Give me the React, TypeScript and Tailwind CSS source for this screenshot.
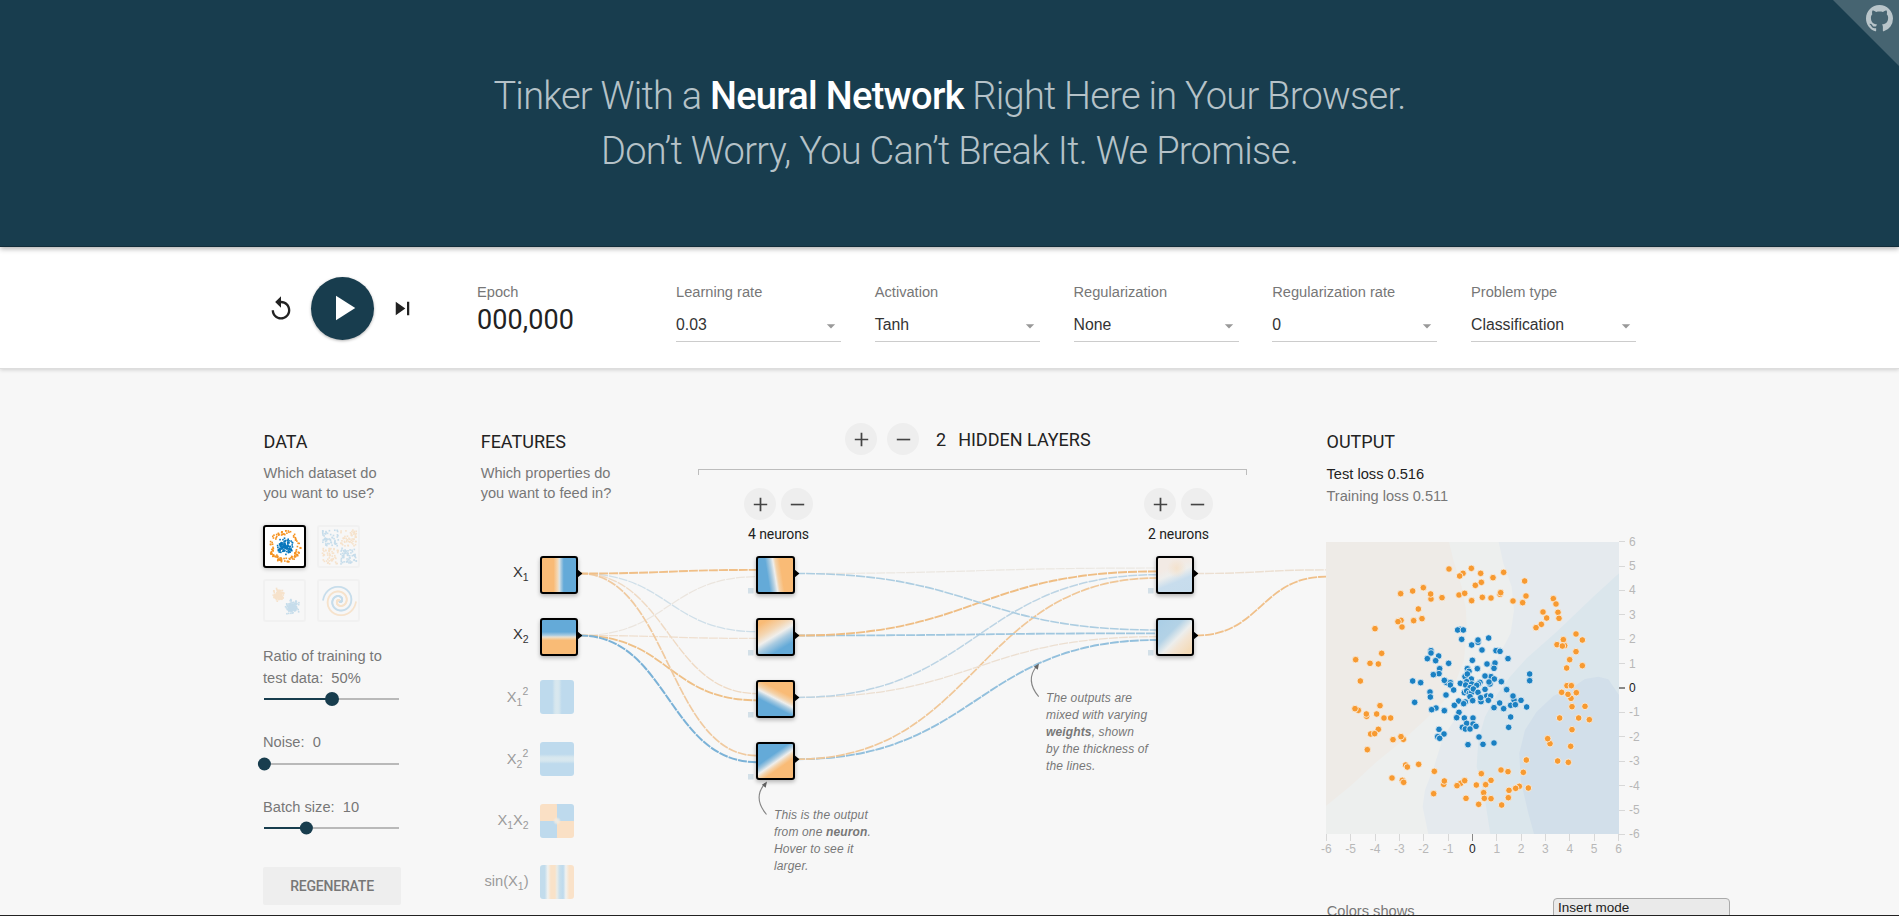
import React from "react";

const arial = "font-['Liberation_Sans',Arial,sans-serif]";
const roboto = "font-['Roboto',sans-serif]";

type Pt = [number, number];

function seeded(seed: number) {
  let a = seed;
  return () => {
    a = (a + 0x6d2b79f5) | 0;
    let t = Math.imul(a ^ (a >>> 15), 1 | a);
    t = (t + Math.imul(t ^ (t >>> 7), 61 | t)) ^ t;
    return ((t ^ (t >>> 14)) >>> 0) / 4294967296;
  };
}

const ORANGE = "#f59322";
const BLUE = "#0877bd";

/* ---------- header ---------- */

function GithubCorner() {
  return (
    <div className="absolute right-0 top-0 h-[66px] w-[66px]">
      <svg viewBox="0 0 66 66" className="absolute inset-0 h-full w-full">
        <path d="M0 0H66V66Z" fill="#466471" />
      </svg>
      <svg viewBox="0 0 16 16" className="absolute right-[6px] top-[5px] h-[27px] w-[27px]" fill="#b9c5ca">
        <path d="M8 0C3.58 0 0 3.58 0 8c0 3.54 2.29 6.53 5.47 7.59.4.07.55-.17.55-.38 0-.19-.01-.82-.01-1.49-2.01.37-2.53-.49-2.69-.94-.09-.23-.48-.94-.82-1.13-.28-.15-.68-.52-.01-.53.63-.01 1.08.58 1.23.82.72 1.21 1.87.87 2.33.66.07-.52.28-.87.51-1.07-1.78-.2-3.64-.89-3.64-3.95 0-.87.31-1.59.82-2.15-.08-.2-.36-1.02.08-2.12 0 0 .67-.21 2.2.82.64-.18 1.32-.27 2-.27s1.36.09 2 .27c1.53-1.04 2.2-.82 2.2-.82.44 1.1.16 1.92.08 2.12.51.56.82 1.27.82 2.15 0 3.07-1.87 3.75-3.65 3.95.29.25.54.73.54 1.48 0 1.07-.01 1.93-.01 2.2 0 .21.15.46.55.38A8.01 8.01 0 0 0 16 8c0-4.42-3.58-8-8-8z" />
      </svg>
    </div>
  );
}

function Header() {
  return (
    <header className="relative z-20 h-[247px] shrink-0 border-b border-[#122d3a] bg-[#183d4e] pt-[69px] shadow-[0_2px_5px_rgba(0,0,0,0.3)]">
      <h1 className={`${roboto} text-center text-[38px] font-light leading-[55px] tracking-[-0.72px] text-[#b5c2c8]`}>
        Tinker With a <b className="font-medium text-white">Neural Network</b> Right Here in Your Browser.
        <br />
        <span className="tracking-[-0.68px]">Don’t Worry, You Can’t Break It. We Promise.</span>
      </h1>
      <GithubCorner />
    </header>
  );
}

/* ---------- top controls ---------- */

function Select({ label, value }: { label: string; value: string }) {
  return (
    <div className="w-[165px] shrink-0">
      <div className="whitespace-nowrap text-[14.65px] leading-5 text-[#777]">{label}</div>
      <div className="mt-[11px] flex items-center justify-between border-b border-[#ccc] pb-1 text-[15.8px] leading-6 text-[#333]">
        <span>{value}</span>
        <svg viewBox="0 0 24 24" className="mt-[2px] h-5 w-5" fill="#999">
          <path d="M7 10l5 5 5-5z" />
        </svg>
      </div>
    </div>
  );
}

function Controls() {
  return (
    <section className="relative z-10 flex h-[122px] shrink-0 border-b border-[#ddd] bg-white pl-[267px] shadow-[0_1px_4px_rgba(0,0,0,0.16)]">
      <div className="flex h-[122px] items-center">
        <svg viewBox="0 0 24 24" className="mt-[2px] h-7 w-7" fill="#222">
          <path d="M12 5V1L7 6l5 5V7c3.31 0 6 2.69 6 6s-2.69 6-6 6-6-2.69-6-6H4c0 4.42 3.58 8 8 8s8-3.58 8-8-3.58-8-8-8z" />
        </svg>
        <button className="ml-4 flex h-[63px] w-[63px] items-center justify-center rounded-full bg-[#183d4e] shadow-[0_1px_3px_rgba(0,0,0,0.3)]">
          <svg viewBox="0 0 24 24" className="h-[42px] w-[42px]" fill="#fff">
            <path d="M8 5v14l11-7z" />
          </svg>
        </button>
        <svg viewBox="0 0 24 24" className="ml-[15px] h-[27px] w-[27px]" fill="#222">
          <path d="M6 18l8.5-6L6 6v12zM16 6v12h2V6h-2z" />
        </svg>
      </div>
      <div className="ml-[61px] w-[199px] pt-[35px]">
        <div className="text-[14.65px] leading-5 text-[#777]">Epoch</div>
        <div className={`${roboto} mt-[2px] text-[27px] font-normal leading-8 tracking-[0.1px] text-[#222]`}>000,000</div>
      </div>
      <div className="flex gap-[33.75px] pt-[35px]">
        <Select label="Learning rate" value="0.03" />
        <Select label="Activation" value="Tanh" />
        <Select label="Regularization" value="None" />
        <Select label="Regularization rate" value="0" />
        <Select label="Problem type" value="Classification" />
      </div>
    </section>
  );
}

/* ---------- data column ---------- */

function Title({ children }: { children: React.ReactNode }) {
  return <h4 className={`${roboto} text-[18px] font-normal leading-6 text-[#222]`}>{children}</h4>;
}

type Dot = { x: number; y: number; c: string };

function circleDots(): Dot[] {
  const r = seeded(11);
  const out: Dot[] = [];
  for (let i = 0; i < 130; i++) {
    const a = r() * Math.PI * 2;
    const d = 8.5 * r();
    out.push({ x: 20 + d * Math.cos(a), y: 19.5 + d * Math.sin(a), c: BLUE });
  }
  for (let i = 0; i < 115; i++) {
    const a = r() * Math.PI * 2;
    const d = 11.8 + r() * 4.2;
    out.push({ x: 20 + d * Math.cos(a), y: 19.5 + d * Math.sin(a), c: ORANGE });
  }
  return out;
}

function xorDots(): Dot[] {
  const r = seeded(37);
  const out: Dot[] = [];
  for (let i = 0; i < 230; i++) {
    const x = r() * 2 - 1;
    const y = r() * 2 - 1;
    out.push({
      x: 20.5 + x * 16 + Math.sign(x),
      y: 20 + y * 16 + Math.sign(y),
      c: x * y > 0 ? BLUE : ORANGE,
    });
  }
  return out;
}

function gaussDots(): Dot[] {
  const r = seeded(5);
  const g = () => (r() + r() + r() - 1.5) * 1.6;
  const out: Dot[] = [];
  for (let i = 0; i < 150; i++) {
    out.push({ x: 14 + g() * 3, y: 14 + g() * 3, c: ORANGE });
    out.push({ x: 27.3 + g() * 3.5, y: 26.5 + g() * 3.5, c: BLUE });
  }
  return out;
}

function spiralDots(): Dot[] {
  const out: Dot[] = [];
  for (let i = 0; i < 150; i++) {
    const d = (i / 150) * 16.5;
    const t = (1.75 * i * 2 * Math.PI) / 150;
    const dx = d * Math.sin(t);
    const dy = d * Math.cos(t);
    out.push({ x: 20.5 + dx, y: 20 + dy, c: BLUE });
    out.push({ x: 20.5 - dx, y: 20 - dy, c: ORANGE });
  }
  return out;
}

function Thumb({ dots, active }: { dots: Dot[]; active?: boolean }) {
  return (
    <div
      className={
        active
          ? "h-[43px] w-[43px] rounded-[3px] border-2 border-black bg-white shadow-[0_1px_4px_rgba(0,0,0,0.25)]"
          : "h-[43px] w-[43px] rounded-[3px] border-2 border-[#f1f1f1]"
      }
    >
      <svg viewBox="0 0 39 39" className={active ? "h-full w-full" : "h-full w-full opacity-20"}>
        {dots.map((d, i) => (
          <rect key={i} x={d.x - 0.8} y={d.y - 0.8} width={1.6} height={1.6} fill={d.c} />
        ))}
      </svg>
    </div>
  );
}

function Slider({ at, big }: { at: number; big?: boolean }) {
  return (
    <svg viewBox="-8 0 151 14" className="-ml-[7px] h-[14px] w-[151px]">
      <rect x="0" y="6" width="135" height="2" fill="#b9b9b9" />
      <rect x="0" y="6" width={at} height="2" fill="#183d4e" />
      <circle cx={at} cy="7" r={big ? 7 : 6.5} fill="#183d4e" />
    </svg>
  );
}

function DataColumn() {
  return (
    <div className="w-[217px] shrink-0 pt-[7px]">
      <div className="pl-[0.5px]">
        <Title>DATA</Title>
        <p className="mt-[9px] text-[14.65px] leading-5 text-[#777]">
          Which dataset do
          <br />
          you want to use?
        </p>
      </div>
      <div className="mt-[22px] grid w-[97px] grid-cols-2 gap-[11px]">
        <Thumb dots={circleDots()} active />
        <Thumb dots={xorDots()} />
        <Thumb dots={gaussDots()} />
        <Thumb dots={spiralDots()} />
      </div>
      <p className="mt-[23px] text-[14.65px] leading-[22px] text-[#777]">
        Ratio of training to
        <br />
        test data:&nbsp; 50%
      </p>
      <div className="mt-[3px] flex">
        <Slider at={68} big />
      </div>
      <p className="mt-[25px] text-[14.65px] leading-[22px] text-[#777]">Noise:&nbsp; 0</p>
      <div className="mt-1 flex">
        <Slider at={0.4} />
      </div>
      <p className="mt-[25px] text-[14.65px] leading-[22px] text-[#777]">Batch size:&nbsp; 10</p>
      <div className="mt-[3px] flex">
        <Slider at={42.4} />
      </div>
      <button className={`${roboto} mt-8 h-[38px] w-[138px] rounded-[2px] bg-[#eee] text-[14px] font-medium tracking-[-0.2px] text-[#777]`}>
        REGENERATE
      </button>
    </div>
  );
}

/* ---------- network ---------- */

function RoundButton({ minus }: { minus?: boolean }) {
  return (
    <button className="flex h-8 w-8 items-center justify-center rounded-full bg-[#eee]">
      <svg viewBox="0 0 24 24" className="mt-px h-[23px] w-[23px]" fill="#444">
        {minus ? <path d="M5 11.2h14v1.7H5z" /> : <path d="M19 12.9h-6.1V19h-1.8v-6.1H5v-1.8h6.1V5h1.8v6.1H19z" />}
      </svg>
    </button>
  );
}

function NeuronControls({ label }: { label: string }) {
  return (
    <div className="w-[69px]">
      <div className="flex justify-between">
        <RoundButton />
        <RoundButton minus />
      </div>
      <div className={`${roboto} mt-[6px] whitespace-nowrap text-center text-[14px] leading-4 tracking-[-0.1px] text-[#222]`}>
        {label}
      </div>
    </div>
  );
}

type Link = { from: Pt; to: Pt; c: string; w: number };

const Y = [32.5, 94.5, 156.4, 218.2];

const LINKS: Link[] = [
  { from: [100, Y[1]], to: [277, 35.7], c: "#ebe5de", w: 1.2 },
  { from: [100, Y[1]], to: [277, 97.4], c: "#efdfcf", w: 1.3 },
  { from: [100, Y[1]], to: [277, 159.3], c: "#efc087", w: 1.8 },
  { from: [100, Y[1]], to: [277, 221.2], c: "#7bb2d7", w: 2 },
  { from: [100, Y[0]], to: [277, 90.7], c: "#cfdfe9", w: 1.3 },
  { from: [100, Y[0]], to: [277, 152.6], c: "#efdac4", w: 1.4 },
  { from: [100, Y[0]], to: [277, 214.7], c: "#f0caa0", w: 1.7 },
  { from: [100, Y[0]], to: [277, 28.9], c: "#f0bf87", w: 1.9 },
  { from: [317, Y[0]], to: [677, 27], c: "#ebe7e1", w: 1.2 },
  { from: [317, Y[3]], to: [677, 99], c: "#93c0dd", w: 1.9 },
  { from: [317, Y[3]], to: [677, 37], c: "#f0c798", w: 1.7 },
  { from: [317, Y[2]], to: [677, 95.7], c: "#ecdfd1", w: 1.3 },
  { from: [317, Y[2]], to: [677, 33.7], c: "#bcd4e4", w: 1.5 },
  { from: [317, Y[1]], to: [677, 92.3], c: "#a0c7df", w: 1.8 },
  { from: [317, Y[1]], to: [677, 30.4], c: "#efbd83", w: 1.9 },
  { from: [317, Y[0]], to: [677, 89], c: "#accde1", w: 1.6 },
  { from: [716, Y[0]], to: [846, 28.9], c: "#ecdfd1", w: 1.4 },
  { from: [716, Y[1]], to: [846, 35.7], c: "#f0c08a", w: 1.8 },
];

function curve([x1, y1]: Pt, [x2, y2]: Pt) {
  const m = (x1 + x2) / 2;
  return `M${x1} ${y1}C${m} ${y1} ${m} ${y2} ${x2} ${y2}`;
}

const NUBS: Pt[] = [
  [97, Y[0]], [97, Y[1]],
  [314, Y[0]], [314, Y[1]], [314, Y[2]], [314, Y[3]],
  [713, Y[0]], [713, Y[1]],
];

const BIASES: Pt[] = [
  [268, 47], [268, 109], [268, 171], [268, 233], [668, 47], [668, 109],
];

function FeatureLabel({ x, y, faded, parts }: { x: number; y: number; faded?: boolean; parts: [string, number][] }) {
  let prev = 0;
  return (
    <text x={x} y={y} fill={faded ? "#9b9b9b" : "#333"} fontSize="15" className={arial}>
      {parts.map(([t, shift], i) => {
        const dy = shift - prev;
        prev = shift;
        return (
          <tspan key={i} dy={dy} fontSize={shift === 0 ? 14.7 : 10.5}>
            {t}
          </tspan>
        );
      })}
    </text>
  );
}

const ACTIVE_TILE = "absolute rounded-[3px] border-2 border-black shadow-[0_2px_4px_rgba(0,0,0,0.28)]";
const TILE = "absolute left-[60px] h-[34px] w-[34px] rounded-[3px]";

function Network() {
  return (
    <div className="relative h-[375px] w-[846px]">
      <svg viewBox="0 0 846 375" className="absolute inset-0 h-full w-full">
        {LINKS.map((l, i) => (
          <path key={i} d={curve(l.from, l.to)} fill="none" stroke={l.c} strokeWidth={l.w} strokeDasharray="9 1" strokeDashoffset="1" />
        ))}
        {NUBS.map(([x, y], i) => (
          <path key={i} d={`M${x} ${y - 4.5}L${x + 5.4} ${y}L${x} ${y + 4.5}Z`} fill="#000" />
        ))}
        {BIASES.map(([x, y], i) => (
          <rect key={i} x={x} y={y} width="5.5" height="5.5" fill="#d3e0e8" />
        ))}
        <FeatureLabel x={33} y={36.4} parts={[["X", 0], ["1", 4]]} />
        <FeatureLabel x={33} y={98.4} parts={[["X", 0], ["2", 4]]} />
        <FeatureLabel x={26.8} y={160.8} faded parts={[["X", 0], ["1", 4], ["2", -6.5]]} />
        <FeatureLabel x={26.8} y={222.6} faded parts={[["X", 0], ["2", 4], ["2", -6.5]]} />
        <FeatureLabel x={17.4} y={284} faded parts={[["X", 0], ["1", 4], ["X", 0], ["2", 4]]} />
        <FeatureLabel x={4.4} y={345.4} faded parts={[["sin(X", 0], ["1", 4], [")", 0]]} />
        <g fill="none" stroke="#858585" strokeWidth="1.1">
          <path d="M286.5 273.5Q272.5 257 285 242.5" />
          <path d="M558.7 155.7Q544.7 139 557.2 124.5" />
        </g>
        <g fill="#666">
          <path d="M287 240.5L285.7 246.8L281.8 243.8Z" />
          <path d="M559 122.5L557.8 128.8L553.8 125.8Z" />
        </g>
      </svg>

      <div className={`${ACTIVE_TILE} left-[60px] top-[15px] h-[38px] w-[38px] bg-[linear-gradient(90deg,#f9bb76_34%,#f3d9b8_46%,#dfe5e4_51%,#a9cbe0_56%,#64aad8_64%)]`} />
      <div className={`${ACTIVE_TILE} left-[60px] top-[77px] h-[38px] w-[38px] bg-[linear-gradient(180deg,#64aad8_35%,#a9cbe0_45%,#e8e0d2_50%,#f3d2a8_54%,#f9bb76_60%)]`} />
      <div className={`${TILE} top-[139px] bg-[linear-gradient(90deg,#bedaed_36%,#d5e6ee_44%,#d9e8ef_50%,#d5e6ee_56%,#bedaed_64%)]`} />
      <div className={`${TILE} top-[201px] bg-[linear-gradient(180deg,#bedaed_36%,#d5e6ee_44%,#d9e8ef_50%,#d5e6ee_56%,#bedaed_64%)]`} />
      <div className={`${TILE} top-[263px] bg-[radial-gradient(circle_at_center,#f0ebe2_0,#f0ebe2cc_8%,transparent_17%),conic-gradient(#bedaed_0deg_88deg,#fae0c5_92deg_178deg,#bedaed_182deg_268deg,#fae0c5_272deg_358deg,#bedaed_360deg)]`} />
      <div className={`${TILE} top-[324px] bg-[linear-gradient(90deg,#c2dcec_14%,#f1f2f0_23%,#f9e2c8_32%,#f9e2c8_44%,#e9ece8_50%,#c8dfec_58%,#bedaed_68%,#f1f2f0_76%,#fae2c9_86%)]`} />

      <div className={`${ACTIVE_TILE} left-[276px] top-[15px] h-[38px] w-[39px] bg-[linear-gradient(81deg,#64aad8_30%,#b5d0e1_42%,#eeeeec_49%,#f4d2a9_55%,#f9bb76_66%)]`} />
      <div className={`${ACTIVE_TILE} left-[276px] top-[77px] h-[38px] w-[39px] bg-[linear-gradient(149deg,#f9bb76_10%,#f4d6b2_32%,#f0efec_47%,#a9cbe1_60%,#64aad8_78%)]`} />
      <div className={`${ACTIVE_TILE} left-[276px] top-[139px] h-[38px] w-[39px] bg-[linear-gradient(27deg,#64aad8_34%,#a9cbe1_44%,#eeeeec_51%,#f4d2a9_59%,#f9bb76_70%)]`} />
      <div className={`${ACTIVE_TILE} left-[276px] top-[201px] h-[38px] w-[39px] bg-[linear-gradient(145deg,#64aad8_36%,#a9cbe1_45%,#eeeeec_52%,#f4d2a9_59%,#f9bb76_67%)]`} />

      <div className={`${ACTIVE_TILE} left-[676px] top-[15px] h-[38px] w-[38px] bg-[radial-gradient(circle_at_55%_30%,#f4e2cd_0,transparent_32%),linear-gradient(158deg,#f2eae4_30%,#eeeeec_46%,#c8dded_66%,#c6dcec_100%)]`} />
      <div className={`${ACTIVE_TILE} left-[676px] top-[77px] h-[38px] w-[38px] bg-[linear-gradient(135deg,#aacee6_0%,#b3d2e6_36%,#eceeed_55%,#f3e5d4_68%,#f4dbb9_90%)]`} />

      <p className="absolute left-[294px] top-[266px] whitespace-nowrap text-[12px] italic leading-[17px] tracking-[0.14px] text-[#777]">
        This is the output
        <br />
        from one <b>neuron</b>.
        <br />
        Hover to see it
        <br />
        larger.
      </p>
      <p className="absolute left-[566px] top-[149px] whitespace-nowrap text-[12px] italic leading-[17px] tracking-[0.14px] text-[#777]">
        The outputs are
        <br />
        mixed with varying
        <br />
        <b>weights</b>, shown
        <br />
        by the thickness of
        <br />
        the lines.
      </p>
    </div>
  );
}

function NetworkSection() {
  return (
    <div className="w-[846px] shrink-0">
      <div className="flex h-[118px]">
        <div className="w-[218px] pl-[0.7px] pt-[7px]">
          <Title>FEATURES</Title>
          <p className="mt-[9px] whitespace-nowrap text-[14.6px] leading-5 text-[#777]">
            Which properties do
            <br />
            you want to feed in?
          </p>
        </div>
        <div className="w-[549px]">
          <div className={`${roboto} flex h-8 items-center pl-[147px] text-[18px] text-[#222]`}>
            <RoundButton />
            <div className="ml-[10px] flex">
              <RoundButton minus />
            </div>
            <span className="ml-[17px]">2</span>
            <span className="ml-3 whitespace-nowrap">HIDDEN LAYERS</span>
          </div>
          <div className="mt-[14px] h-[6px] border-x border-t border-[#bdbdbd]" />
          <div className="mt-[13px] flex gap-[331px] pl-[46px]">
            <NeuronControls label="4 neurons" />
            <NeuronControls label="2 neurons" />
          </div>
        </div>
      </div>
      <Network />
    </div>
  );
}

/* ---------- output ---------- */

const ORANGE_POINTS: Pt[] = [
  [417, 147], [484, 145], [459, 160], [449, 168], [512, 160], [549, 173], [581, 157], [514, 187], [496, 196], [644, 183],
  [340, 203], [308, 213], [272, 221], [363, 237], [362, 222], [396, 233], [447, 225], [464, 220], [485, 242], [517, 232],
  [543, 234], [570, 223], [572, 218], [609, 243], [648, 228], [638, 248], [730, 236], [738, 252], [325, 267], [273, 301],
  [264, 305], [276, 321], [311, 302], [336, 296], [195, 326], [699, 276], [744, 277], [710, 294], [747, 295], [694, 313],
  [678, 323], [215, 400], [137, 419], [180, 430], [205, 432], [151, 483], [798, 342], [817, 360], [760, 359], [741, 374],
  [764, 377], [757, 378], [798, 395], [779, 419], [817, 437], [770, 444], [771, 497], [784, 497], [783, 535], [755, 517],
  [774, 523], [799, 518], [786, 560], [825, 559], [145, 571], [135, 566], [210, 557], [170, 589], [169, 582], [200, 582],
  [222, 594], [242, 594], [749, 594], [806, 594], [838, 599], [205, 628], [182, 642], [194, 641], [249, 659], [280, 658],
  [273, 650], [172, 689], [786, 629], [720, 671], [713, 656], [782, 679], [743, 723], [775, 727], [287, 735], [292, 741],
  [326, 733], [246, 774], [277, 781], [281, 787], [373, 754], [371, 821], [401, 793], [403, 783], [452, 790], [441, 797],
  [464, 782], [514, 761], [499, 795], [527, 794], [543, 781], [468, 835], [521, 818], [523, 835], [543, 836], [506, 853],
  [573, 750], [594, 755], [575, 855], [595, 833], [597, 811], [628, 799], [617, 805], [640, 757], [649, 720], [655, 804],
];

const BLUE_POINTS: Pt[] = [
  [450, 328], [443, 330], [460, 330], [455, 358], [485, 375], [504, 367], [504, 360], [536, 354], [516, 390], [567, 392],
  [558, 392], [570, 394], [363, 392], [363, 399], [386, 408], [352, 416], [377, 422], [416, 430], [594, 416], [487, 421],
  [531, 432], [552, 440], [555, 429], [552, 445], [389, 446], [387, 461], [370, 464], [502, 446], [472, 446], [477, 454],
  [465, 470], [472, 462], [543, 470], [525, 468], [553, 477], [574, 485], [484, 477], [308, 483], [332, 488], [410, 488],
  [403, 481], [421, 488], [421, 495], [451, 490], [470, 485], [467, 495], [485, 492], [510, 487], [505, 492], [500, 496],
  [540, 492], [537, 486], [431, 510], [480, 503], [525, 508], [590, 509], [659, 462], [659, 482], [360, 516], [361, 531],
  [408, 525], [463, 518], [470, 513], [478, 520], [485, 517], [490, 507], [504, 517], [530, 528], [542, 528], [480, 530],
  [488, 542], [513, 545], [512, 533], [535, 541], [314, 547], [446, 543], [466, 546], [461, 551], [433, 556], [569, 549],
  [612, 540], [609, 528], [633, 541], [602, 556], [616, 554], [650, 561], [552, 563], [581, 566], [378, 564], [365, 569],
  [403, 572], [447, 577], [440, 593], [463, 594], [489, 594], [602, 591], [387, 628], [402, 642], [383, 650], [389, 655],
  [457, 622], [470, 610], [489, 612], [466, 627], [480, 627], [498, 619], [596, 622], [507, 651], [474, 674], [519, 673],
  [552, 669],
];

const TICKS = [-6, -5, -4, -3, -2, -1, 0, 1, 2, 3, 4, 5, 6];

function HeatMap() {
  return (
    <svg viewBox="0 0 330 318" className="mt-[35px] block h-[318px] w-[330px] overflow-visible">
      <svg x="0" y="0" width="293" height="292" viewBox="48 66 879 876">
        <rect x="48" y="66" width="879" height="876" fill="#eeebe7" />
        <path fill="#edefee" d="M417 66L430 120L455 200L468 270L470 330L462 420L435 490L400 545L345 600L270 668L200 725L125 795L48 858V942H927V66Z" />
        <path fill="#e5eaee" d="M566 66L580 130L605 200L612 270L602 340L565 410L520 470L475 530L440 590L400 650L372 740L345 810L338 860L355 942H927V66Z" />
        <path fill="#dbe6ec" d="M927 160L850 230L740 335L650 415L600 470L560 525L525 590L505 660L500 740L525 840L541 942H927Z" />
        <path fill="#d2dfea" d="M927 525L895 478L865 470L825 477L790 500L730 528L680 575L645 630L628 700L632 780L655 880L672 942H927Z" />
        {ORANGE_POINTS.map(([x, y], i) => (
          <circle key={i} cx={x} cy={y} r="9.9" fill="#f79a31" stroke="#f8eee1" strokeWidth="2.6" />
        ))}
        {BLUE_POINTS.map(([x, y], i) => (
          <circle key={i} cx={x} cy={y} r="9.9" fill="#1a80c2" stroke="#e3eef5" strokeWidth="2.6" />
        ))}
      </svg>
      {TICKS.map((t) => {
        const x = 146.4 + t * 24.35;
        const y = 146 - t * 24.4;
        const line = t === 0 ? "#888" : "#d8d8d8";
        const fill = t === 0 ? "#222" : "#b8b8b8";
        return (
          <g key={t} className={arial} fontSize="12">
            <path d={`M${Math.floor(x) + 0.5} 292v7`} stroke={line} />
            <text x={x} y={310.6} textAnchor="middle" fill={fill}>{t}</text>
            <path d={`M293 ${t === 0 ? Math.round(y) : Math.floor(y) + 0.5}h6`} stroke={line} strokeWidth={t === 0 ? 2 : 1} />
            <text x={303} y={y + 4} fill={fill}>{t}</text>
          </g>
        );
      })}
    </svg>
  );
}

function OutputColumn() {
  return (
    <div className="w-[420px] shrink-0 pt-[7px]">
      <div className="pl-[0.5px]">
        <Title>OUTPUT</Title>
        <div className="mt-[9px] text-[14.65px] leading-[22px] text-[#222]">Test loss 0.516</div>
        <div className="text-[14.6px] leading-[22px] text-[#777]">Training loss 0.511</div>
      </div>
      <HeatMap />
      <div className="mt-[38px] flex">
        <div className="w-[227px] pl-[0.7px] pt-[3px] text-[14.65px] leading-5 text-[#777]">Colors shows</div>
        <div className="h-7 w-[177px] rounded-[4px] border border-[#aaa] bg-[#eaeaea] pl-1 text-[13.5px] leading-[17px] text-[#222]">
          Insert mode
        </div>
      </div>
    </div>
  );
}

export default function App() {
  return (
    <div className={`${arial} flex h-[916px] w-[1899px] flex-col overflow-hidden bg-[#f7f7f7]`}>
      <Header />
      <Controls />
      <main className="flex h-[546px] shrink-0 overflow-hidden pl-[263px] pt-[54px]">
        <DataColumn />
        <NetworkSection />
        <OutputColumn />
      </main>
      <div className="h-px shrink-0 bg-[#222]" />
    </div>
  );
}
